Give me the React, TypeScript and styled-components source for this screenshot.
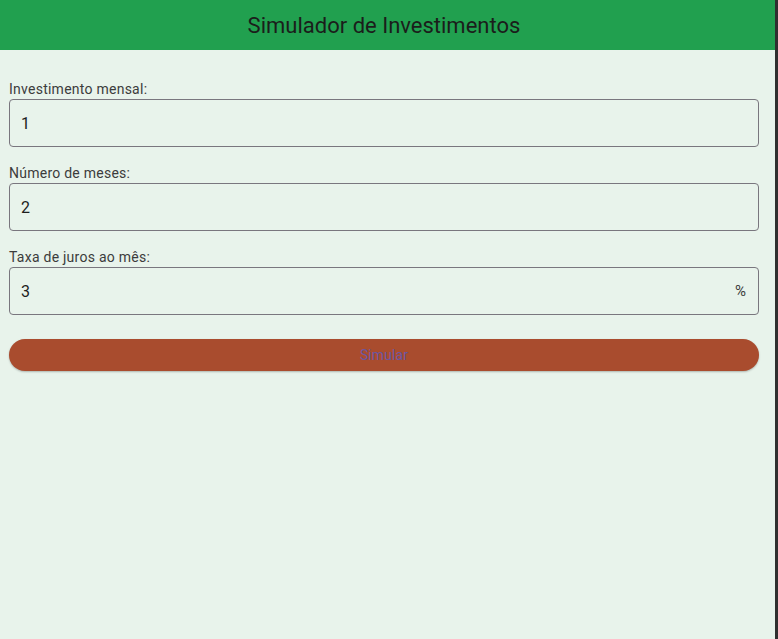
import React from "react";
import styled, { createGlobalStyle } from "styled-components";

const Global = createGlobalStyle`
  html, body { margin: 0; padding: 0; }
  body {
    background: #e8f3eb;
    font-family: Roboto, "Liberation Sans", sans-serif;
    width: 778px;
    height: 639px;
    overflow: hidden;
  }
`;

const Frame = styled.div`
  display: flex;
  width: 778px;
  height: 639px;
`;

const Main = styled.div`
  flex: 1;
  display: flex;
  flex-direction: column;
  background: #e8f3eb;
`;

const Edge = styled.div`
  width: 3px;
  background: #2f2f2f;
`;

const Header = styled.header`
  height: 50px;
  background: #21a04f;
  display: flex;
  align-items: center;
  justify-content: center;
  padding-right: 7px;
`;

const Title = styled.h1`
  margin: 0;
  font-size: 22px;
  font-weight: 400;
  color: #1b1d1b;
  letter-spacing: 0;
`;

const Form = styled.form`
  display: flex;
  flex-direction: column;
  padding: 29px 16px 0 9px;
`;

const Field = styled.div`
  display: flex;
  flex-direction: column;
  margin-bottom: ${(p: { $last?: boolean }) => (p.$last ? "24px" : "16px")};
`;

const Label = styled.label`
  font-size: 14px;
  line-height: 20px;
  letter-spacing: 0.25px;
  color: #3c3c3c;
`;

const Box = styled.div`
  height: 48px;
  box-sizing: border-box;
  border: 1px solid #79767e;
  border-radius: 4px;
  display: flex;
  align-items: center;
  padding: 0 12px 0 11px;
  font-size: 16px;
  letter-spacing: 0.5px;
  color: #1d1d1d;
`;

const Value = styled.span`
  flex: 1;
`;

const Suffix = styled.span`
  color: #3c3c3c;
  font-size: 15px;
  letter-spacing: 0;
`;

const Button = styled.button`
  height: 32px;
  border: none;
  border-radius: 16px;
  background: #a94c2e;
  color: #6a56a3;
  font-family: Roboto, "Liberation Sans", sans-serif;
  font-size: 14px;
  letter-spacing: 0.1px;
  box-shadow: 0 1px 2px rgba(0, 0, 0, 0.25);
  padding: 0;
  cursor: pointer;
`;

const fields = [
  { label: "Investimento mensal:", value: "1" },
  { label: "Número de meses:", value: "2" },
  { label: "Taxa de juros ao mês:", value: "3", suffix: "%" },
];

export default function App() {
  return (
    <>
      <Global />
      <Frame>
        <Main>
          <Header>
            <Title>Simulador de Investimentos</Title>
          </Header>
          <Form onSubmit={(e) => e.preventDefault()}>
            {fields.map((f, i) => (
              <Field key={f.label} $last={i === fields.length - 1}>
                <Label>{f.label}</Label>
                <Box>
                  <Value>{f.value}</Value>
                  {f.suffix && <Suffix>{f.suffix}</Suffix>}
                </Box>
              </Field>
            ))}
            <Button type="submit">Simular</Button>
          </Form>
        </Main>
        <Edge />
      </Frame>
    </>
  );
}
